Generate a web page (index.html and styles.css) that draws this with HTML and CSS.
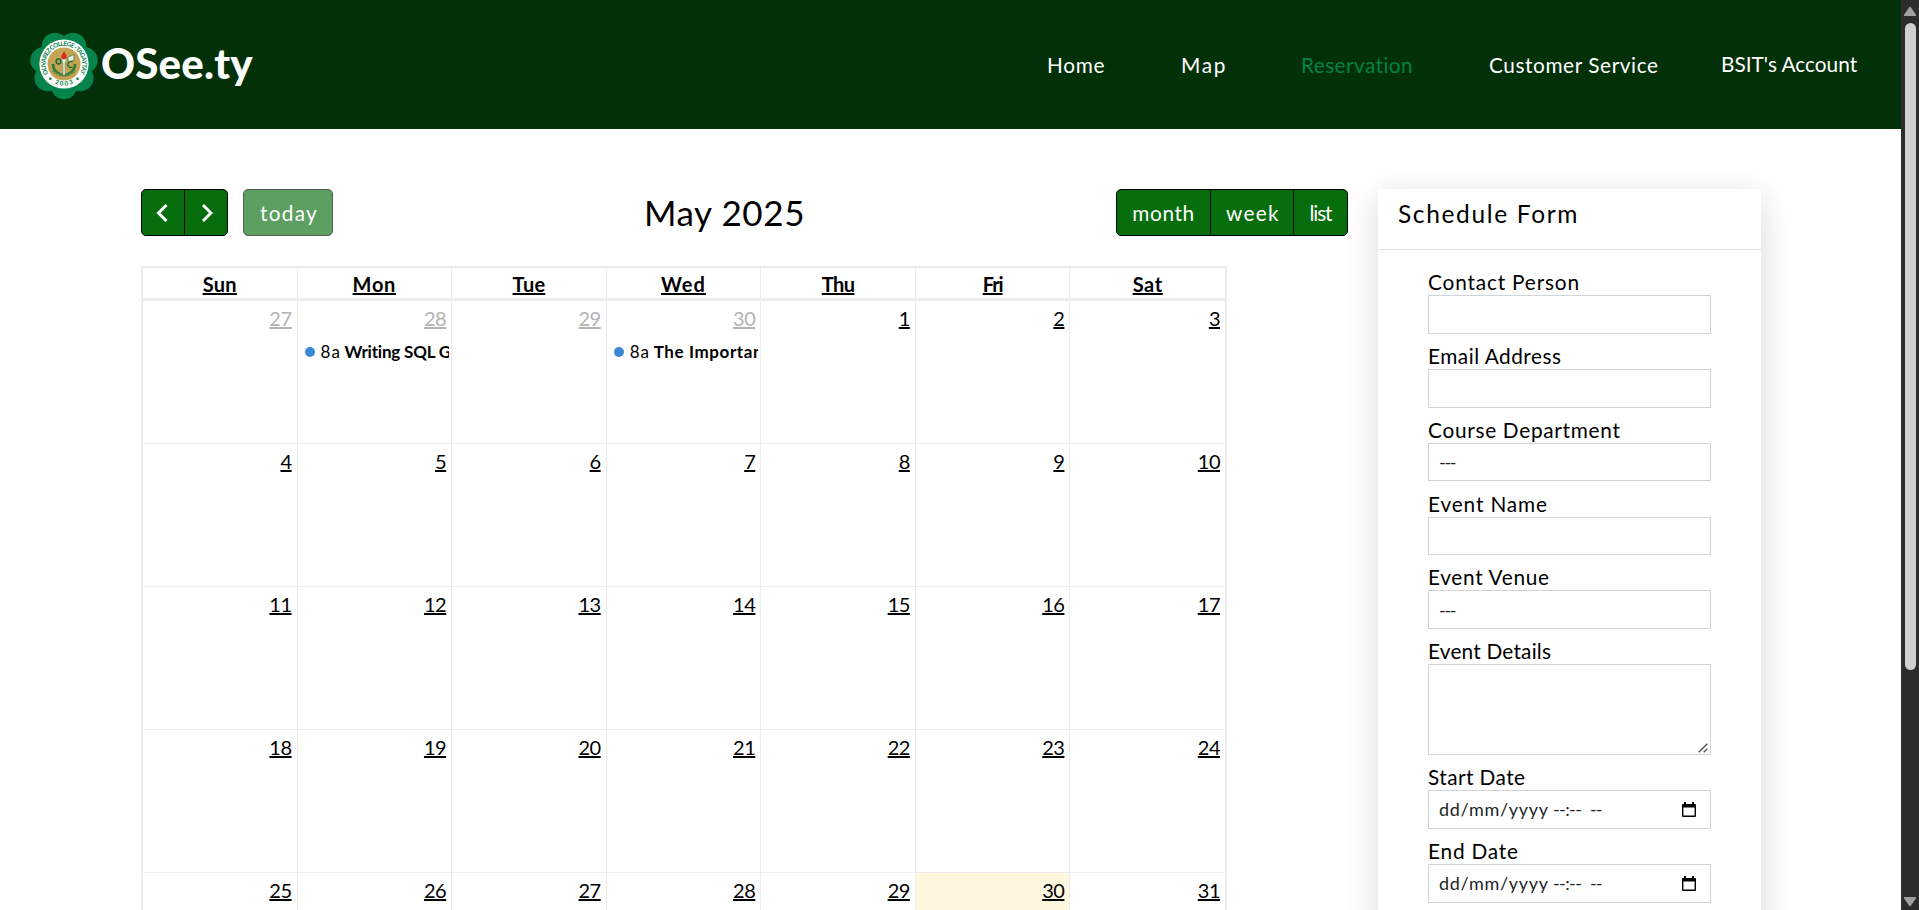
FILE: index.html
```
<!DOCTYPE html>
<html lang="en">
<head>
<meta charset="utf-8">
<title>OSee.ty - Reservation</title>
<link rel="stylesheet" href="styles.css">
</head>
<body>
<div class="window">
<div class="page">
  <header class="header">
    <a class="brand">
      <svg class="seal" width="80" height="80" viewBox="-40 -40 80 80">
        <g fill="#06834a">
          <circle r="27"/>
          <circle cx="0" cy="21" r="13.2"/>
          <circle cx="0" cy="21" r="13.2" transform="rotate(51.43)"/>
          <circle cx="0" cy="21" r="13.2" transform="rotate(102.86)"/>
          <circle cx="0" cy="21" r="13.2" transform="rotate(154.29)"/>
          <circle cx="0" cy="21" r="13.2" transform="rotate(205.71)"/>
          <circle cx="0" cy="21" r="13.2" transform="rotate(257.14)"/>
          <circle cx="0" cy="21" r="13.2" transform="rotate(308.57)"/>
        </g>
        <circle cy="-1" r="24.6" fill="#fff"/>
        <circle cy="-1" r="16.5" fill="#c4a452"/>
        <path id="arc-top" d="M-15.2 9.5A18.4 18.4 0 1 1 15.2 9.5" fill="none"/>
        <path id="arc-bottom" d="M-15 14.6A21.8 21.8 0 0 0 15 14.6" fill="none"/>
        <text class="seal-text"><textPath href="#arc-top" textLength="77" startOffset="1">OLIVAREZ COLLEGE - TAGAYTAY</textPath></text>
        <text class="seal-text" text-anchor="middle"><textPath href="#arc-bottom" startOffset="50%" textLength="19">2003</textPath></text>
        <circle cx="-13.6" cy="13.8" r="1.3" fill="#06834a"/>
        <circle cx="13.6" cy="13.8" r="1.3" fill="#06834a"/>
        <path d="M-11 -1A11 11 0 0 0 11 -1" fill="none" stroke="#2f7a3c" stroke-width="2.6"/>
        <path d="M-12 6Q0 15 12 6" fill="none" stroke="#7d8a3c" stroke-width="2" stroke-dasharray="1.5 .8"/>
        <circle cx="-5.5" cy="-3.5" r="2.4" fill="none" stroke="#1c6b35" stroke-width="1.5"/>
        <path d="M8.5 -3A3 3 0 1 0 8.5 2" fill="none" stroke="#1c6b35" stroke-width="1.3"/>
        <path d="M4 -8l6-2.5v6l-6 1z" fill="#e9efe0" stroke="#2f7a3c" stroke-width=".7"/>
        <path d="M-2.6 -6h5.2L1 -2v12h-2V-2z" fill="#edf3ef" stroke="#4e8a66" stroke-width=".5"/>
        <path d="M0 -13.5q3 3.5 2.6 5.5a2.6 2.3 0 0 1-5.2 0q0-2 2.6-5.5z" fill="#e3241f"/>
      </svg>
      <span class="brand-name">OSee.ty</span>
    </a>
    <nav class="nav">
      <a class="nav-home">Home</a>
      <a class="nav-map">Map</a>
      <a class="active">Reservation</a>
      <a class="nav-service">Customer Service</a>
      <a class="nav-account">BSIT's Account</a>
    </nav>
  </header>

  <main class="main">
    <section class="calendar">
      <div class="toolbar">
        <div class="toolbar-left">
          <div class="group">
            <button class="btn btn-icon" aria-label="Previous"><svg width="14" height="20" viewBox="0 0 14 20"><path d="M10.5 2L2.5 10l8 8"/></svg></button>
            <button class="btn btn-icon" aria-label="Next"><svg width="14" height="20" viewBox="0 0 14 20"><path d="M4 2l8 8-8 8"/></svg></button>
          </div>
          <button class="btn btn-today">today</button>
        </div>
        <h2 class="title">May 2025</h2>
        <div class="group">
          <button class="btn btn-month">month</button>
          <button class="btn btn-week">week</button>
          <button class="btn btn-list">list</button>
        </div>
      </div>

      <div class="table">
        <div class="week-head">
          <div><a class="sun">Sun</a></div><div><a class="mon">Mon</a></div><div><a class="tue">Tue</a></div><div><a class="wed">Wed</a></div><div><a class="thu">Thu</a></div><div><a class="fri">Fri</a></div><div><a class="sat">Sat</a></div>
        </div>
        <div class="week">
          <div class="day other"><a>27</a></div>
          <div class="day other"><a>28</a><div class="event"><i></i><span>8a</span><b class="writing">Writing SQL G</b></div></div>
          <div class="day other"><a>29</a></div>
          <div class="day other"><a>30</a><div class="event"><i></i><span>8a</span><b class="importance">The Importan</b></div></div>
          <div class="day"><a>1</a></div><div class="day"><a>2</a></div><div class="day"><a>3</a></div>
        </div>
        <div class="week">
          <div class="day"><a>4</a></div><div class="day"><a>5</a></div><div class="day"><a>6</a></div><div class="day"><a>7</a></div><div class="day"><a>8</a></div><div class="day"><a>9</a></div><div class="day"><a>10</a></div>
        </div>
        <div class="week">
          <div class="day"><a>11</a></div><div class="day"><a>12</a></div><div class="day"><a>13</a></div><div class="day"><a>14</a></div><div class="day"><a>15</a></div><div class="day"><a>16</a></div><div class="day"><a>17</a></div>
        </div>
        <div class="week">
          <div class="day"><a>18</a></div><div class="day"><a>19</a></div><div class="day"><a>20</a></div><div class="day"><a>21</a></div><div class="day"><a>22</a></div><div class="day"><a>23</a></div><div class="day"><a>24</a></div>
        </div>
        <div class="week">
          <div class="day"><a>25</a></div><div class="day"><a>26</a></div><div class="day"><a>27</a></div><div class="day"><a>28</a></div><div class="day"><a>29</a></div><div class="day today"><a>30</a></div><div class="day"><a>31</a></div>
        </div>
      </div>
    </section>

    <aside class="card">
      <h5 class="card-title">Schedule Form</h5>
      <div class="form">
        <label class="l-contact">Contact Person</label>
        <div class="field"></div>
        <label class="l-email">Email Address</label>
        <div class="field"></div>
        <label class="l-course">Course Department</label>
        <div class="field"><span class="dashes">---</span></div>
        <label class="l-name">Event Name</label>
        <div class="field"></div>
        <label class="l-venue">Event Venue</label>
        <div class="field"><span class="dashes">---</span></div>
        <label class="l-details">Event Details</label>
        <div class="field area"><svg width="10" height="10" viewBox="0 0 10 10"><path d="M.7 9.3L9.3.7M5.7 9.3l3.6-3.6"/></svg></div>
        <label class="l-start">Start Date</label>
        <div class="field"><span class="date">dd/mm/yyyy</span><span class="time">--:--</span><span class="ampm">--</span><svg class="picker" width="14" height="16" viewBox="0 0 14 16"><path d="M2 0h2v2h6V0h2v2h1a1 1 0 0 1 1 1v11a1 1 0 0 1-1 1H1a1 1 0 0 1-1-1V3a1 1 0 0 1 1-1h1zM1.4 5.4v8.2h11.2V5.4z" fill-rule="evenodd"/></svg></div>
        <label class="l-end">End Date</label>
        <div class="field"><span class="date">dd/mm/yyyy</span><span class="time">--:--</span><span class="ampm">--</span><svg class="picker" width="14" height="16" viewBox="0 0 14 16"><path d="M2 0h2v2h6V0h2v2h1a1 1 0 0 1 1 1v11a1 1 0 0 1-1 1H1a1 1 0 0 1-1-1V3a1 1 0 0 1 1-1h1zM1.4 5.4v8.2h11.2V5.4z" fill-rule="evenodd"/></svg></div>
      </div>
    </aside>
  </main>
</div>
<div class="scrollbar">
  <svg width="14" height="11" viewBox="0 0 14 11"><path d="M7 1.5L12.3 9.3H1.7z"/></svg>
  <div class="thumb"></div>
  <svg width="14" height="11" viewBox="0 0 14 11"><path d="M7 9.5L1.7 1.7h10.6z"/></svg>
</div>
</div>
</body>
</html>
```
FILE: styles.css
```
* { box-sizing: border-box; }
body { margin: 0; font-family: Lato, "Open Sans", sans-serif; font-size: 20.8px; line-height: 1.2; color: #000; background: #fff; overflow: hidden; }
.window { display: flex; height: 910px; overflow: hidden; }
.page { flex: 1; height: 910px; overflow: hidden; }

.header { display: flex; align-items: center; justify-content: space-between; height: 129px; padding: 0 42px 0 24px; background: #023008; color: #fff; }
.brand { display: flex; align-items: center; }
.seal { display: block; }
.seal-text { font: 700 6.2px Lato, sans-serif; fill: #06834a; }
.brand-name { margin: 0 0 2px -3px; font-size: 42px; font-weight: 900; letter-spacing: .2px; }
.nav { display: grid; grid-template-columns: 134px 120px 188px 232px 138px; align-items: center; padding-top: 2px; white-space: nowrap; }
.nav-home { letter-spacing: .7px; }
.nav-map { letter-spacing: 1.7px; }
.active { color: #018244; letter-spacing: .42px; }
.nav-service { letter-spacing: .58px; }
.nav-account { margin-bottom: 2px; }

.main { display: flex; gap: 30px; align-items: flex-start; padding: 60px 0 0 141px; }
.calendar { width: 1207px; }
.toolbar { display: flex; justify-content: space-between; align-items: center; height: 47px; margin-bottom: 30px; }
.toolbar-left { display: flex; gap: 15px; }
.title { margin: 0 0 2px; font-size: 35px; font-weight: 400; letter-spacing: .6px; }
.group { display: flex; border-radius: 5px; }
.btn { display: flex; align-items: center; justify-content: center; height: 47px; margin: 0; padding: 1px 0 0; border: 1px solid #000; background: #066d0c; color: #fff; font: inherit; border-radius: 5px; }
.group .btn:not(:first-child) { margin-left: -1px; border-top-left-radius: 0; border-bottom-left-radius: 0; }
.group .btn:not(:last-child) { border-top-right-radius: 0; border-bottom-right-radius: 0; }
.btn-icon { width: 44px; padding: 0; }
.btn-icon svg { fill: none; stroke: #fff; stroke-width: 3; }
.btn-today { width: 90px; padding-left: 2px; opacity: .65; letter-spacing: 1.3px; }
.btn-month { width: 95px; letter-spacing: .6px; }
.btn-week { width: 84px; padding-left: 2px; letter-spacing: 1.3px; }
.btn-list { width: 55px; letter-spacing: -1.1px; }

.table { width: 1086px; border: 2px solid #ececec; border-bottom: 0; font-size: 20px; }
.week-head, .week { display: grid; grid-template-columns: repeat(7, 1fr); }
.week-head { height: 33px; border-bottom: 3px solid #ececec; font-weight: 700; text-align: center; }
.week-head > div { padding-top: 4px; border-right: 1px solid #ececec; }
.week-head > div:last-child, .day:last-child { border-right: 0; }
.table a { text-decoration: underline; text-decoration-thickness: 2px; text-underline-offset: 1px; text-decoration-skip-ink: none; }
.sun { letter-spacing: .3px; }
.mon { letter-spacing: .7px; }
.tue { letter-spacing: .2px; }
.wed { letter-spacing: 1px; }
.thu { letter-spacing: -.6px; }
.fri { letter-spacing: -1.1px; }
.sat { letter-spacing: .6px; }
.week { height: 143px; border-bottom: 1px solid #ececec; }
.day { display: flex; flex-direction: column; align-items: flex-end; padding-top: 5px; border-right: 1px solid #ececec; min-width: 0; }
.day > a { margin-right: 5px; letter-spacing: -.5px; }
.other > a { color: #b3b3b3; }
.today { background: #fff8df; }
.event { display: flex; align-items: center; align-self: stretch; height: 21px; margin: 12px 2px 0 7px; overflow: hidden; white-space: nowrap; font-size: 17px; }
.event i { flex: none; width: 10px; height: 10px; margin: 0 6px 1px 0; border-radius: 50%; background: #3788d8; }
.event span { width: 24px; flex: none; letter-spacing: 1px; }
.writing { letter-spacing: -.2px; }
.importance { letter-spacing: .6px; }

.card { width: 383px; height: 780px; background: #fff; box-shadow: 0 8px 32px rgba(0, 0, 0, .15); }
.card-title { height: 61px; margin: 0; padding: 10px 20px 0; border-bottom: 1px solid #dee0e2; font-size: 24.5px; font-weight: 400; letter-spacing: 1.65px; }
.form { padding: 10px 50px 0; }
.form label { display: flex; align-items: flex-end; height: 35.25px; white-space: nowrap; }
.field { display: flex; align-items: center; height: 38.5px; padding: 1px 14px 0 10px; border: 1px solid #ced4da; color: #212529; font-size: 18px; }
.area { height: 91px; align-items: flex-end; justify-content: flex-end; padding: 0 2px 1px; }
.area svg { fill: none; stroke: #555; stroke-width: 1.4; }
.dashes { padding-top: 1px; letter-spacing: -1.3px; }
.date { width: 114px; letter-spacing: .7px; }
.time { width: 37px; letter-spacing: -.6px; }
.ampm { letter-spacing: -1px; }
.picker { margin-left: auto; fill: #000; }
.l-contact { letter-spacing: .83px; }
.l-email { letter-spacing: .5px; }
.l-course { letter-spacing: .71px; }
.l-name { letter-spacing: .87px; }
.l-venue { letter-spacing: .69px; }
.l-details { letter-spacing: .21px; }
.l-start { letter-spacing: .43px; }
.l-end { letter-spacing: .79px; }

.scrollbar { display: flex; flex-direction: column; align-items: center; width: 18px; padding: 6px 0 3px; background: #2c2c2c; }
.scrollbar svg { display: block; fill: #a0a0a0; stroke: #a0a0a0; stroke-width: 1.6; stroke-linejoin: round; }
.scrollbar svg:last-child { margin-top: auto; }
.thumb { width: 11px; height: 647px; margin-top: 6px; border-radius: 6px; background: #d0d0d0; }
```
